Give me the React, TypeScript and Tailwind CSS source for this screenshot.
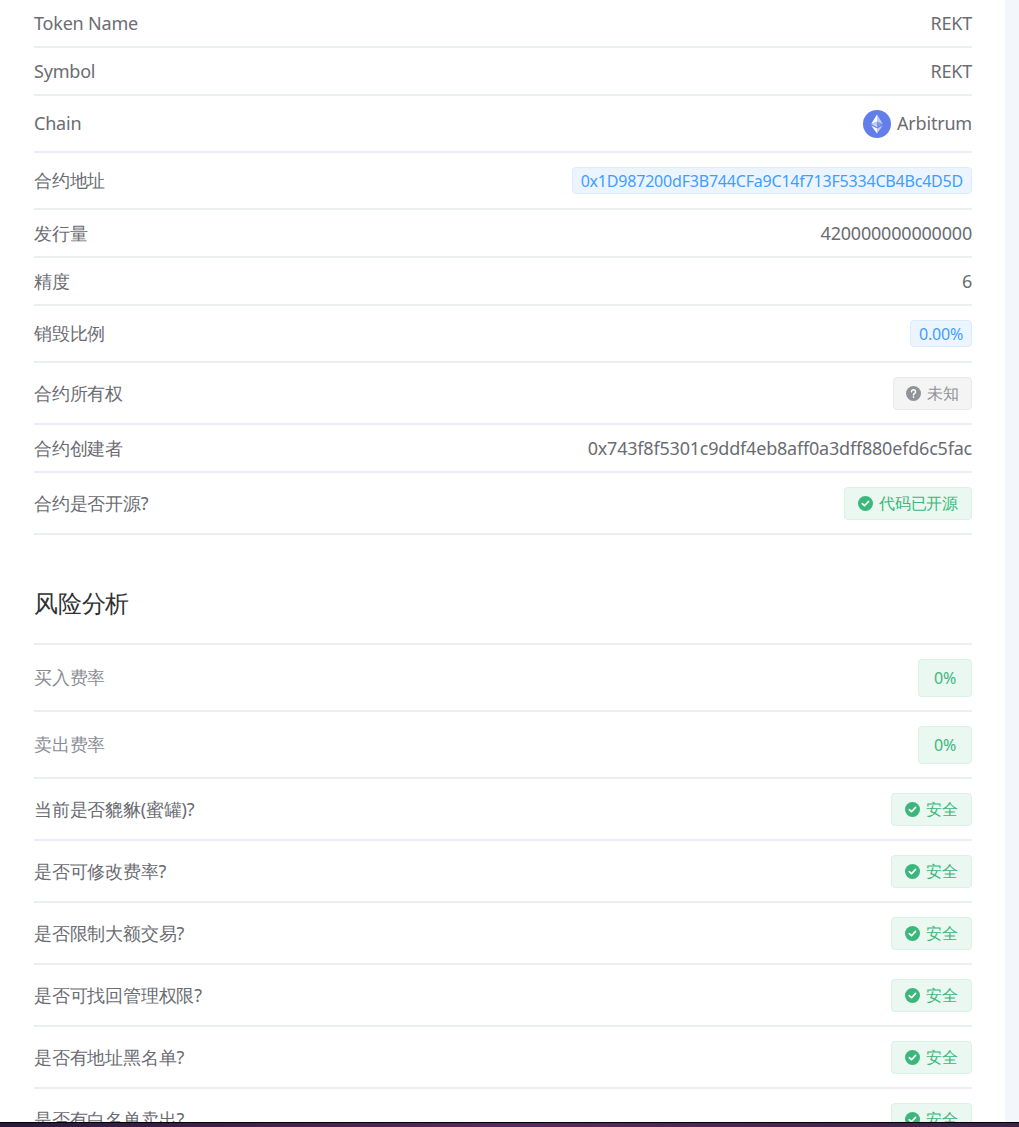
import React from 'react';

const CheckIcon = () => (
  <svg width="15" height="15" viewBox="0 0 16 16" className="shrink-0">
    <circle cx="8" cy="8" r="8" fill="#3cb77b" />
    <path d="M4.6 8.2l2.3 2.2 4.4-4.6" stroke="#fff" strokeWidth="1.8" fill="none" strokeLinecap="round" strokeLinejoin="round" />
  </svg>
);

const QIcon = () => (
  <svg width="15" height="15" viewBox="0 0 16 16" className="shrink-0">
    <circle cx="8" cy="8" r="8" fill="#909399" />
    <path d="M5.8 6.2a2.2 2.2 0 1 1 3 2c-.6.3-.8.6-.8 1.3" stroke="#fff" strokeWidth="1.6" fill="none" strokeLinecap="round" />
    <circle cx="8" cy="11.8" r="0.95" fill="#fff" />
  </svg>
);

const EthIcon = () => (
  <svg width="28" height="28" viewBox="0 0 28 28">
    <circle cx="14" cy="14" r="14" fill="#627eea" />
    <path d="M14 4.5v7l5.8 2.6z" fill="#fff" fillOpacity="0.6" />
    <path d="M14 4.5L8.2 14.1 14 11.5z" fill="#fff" />
    <path d="M14 18.6v4.9l5.8-8.1z" fill="#fff" fillOpacity="0.6" />
    <path d="M14 23.5v-4.9l-5.8-3.2z" fill="#fff" />
    <path d="M14 17.5l5.8-3.4-5.8-2.6z" fill="#fff" fillOpacity="0.2" />
    <path d="M8.2 14.1l5.8 3.4v-6z" fill="#fff" fillOpacity="0.6" />
  </svg>
);

const Safe = ({ text = '安全' }: { text?: string }) => (
  <span className="inline-flex items-center gap-[6px] h-[33px] px-[13px] rounded border border-[#d6f3e4] bg-[#eaf8f1] text-[#3cb77b] text-[16px]">
    <CheckIcon />{text}
  </span>
);

const Row = ({ label, h, children, faint }: { label: string; h: string; children: React.ReactNode; faint?: boolean }) => (
  <div className={`flex items-center justify-between border-b-2 border-[#ebeef5] ${h}`}>
    <span className={`text-[18px] ${faint ? 'text-[#8a8d94]' : 'text-[#6a6c72]'}`}>{label}</span>
    <div className="text-[18px] text-[#6a6c72]">{children}</div>
  </div>
);

export default function App() {
  const risks = ['当前是否貔貅(蜜罐)?', '是否可修改费率?', '是否限制大额交易?', '是否可找回管理权限?', '是否有地址黑名单?'];
  return (
    <div className="relative w-[1019px] h-[1127px] overflow-hidden bg-white font-['DejaVu_Sans','Noto_Sans_CJK_SC',sans-serif] tracking-[-0.2px]">
      <div className="flex h-full">
        <div className="w-[1005px] px-[34px] pr-[33px]">
          <Row label="Token Name" h="h-[48px]">REKT</Row>
          <Row label="Symbol" h="h-[48px]">REKT</Row>
          <Row label="Chain" h="h-[57px]">
            <span className="flex items-center gap-[6px]"><EthIcon />Arbitrum</span>
          </Row>
          <Row label="合约地址" h="h-[57px]">
            <span className="inline-flex items-center h-[27px] px-[8px] rounded border border-[#d9ecff] bg-[#ecf5ff] text-[#409eff] text-[16px]">0x1D987200dF3B744CFa9C14f713F5334CB4Bc4D5D</span>
          </Row>
          <Row label="发行量" h="h-[48px]">420000000000000</Row>
          <Row label="精度" h="h-[48px]">6</Row>
          <Row label="销毁比例" h="h-[57px]">
            <span className="inline-flex items-center h-[27px] px-[8px] rounded border border-[#d9ecff] bg-[#ecf5ff] text-[#409eff] text-[16px]">0.00%</span>
          </Row>
          <Row label="合约所有权" h="h-[62px]">
            <span className="inline-flex items-center gap-[6px] h-[33px] px-[12px] rounded border border-[#e9e9eb] bg-[#f4f4f5] text-[#909399] text-[16px]"><QIcon />未知</span>
          </Row>
          <Row label="合约创建者" h="h-[48px]">0x743f8f5301c9ddf4eb8aff0a3dff880efd6c5fac</Row>
          <Row label="合约是否开源?" h="h-[62px]"><Safe text="代码已开源" /></Row>

          <h2 className="h-[110px] flex items-center pt-[27px] text-[24px] text-[#303133] border-b-2 border-[#ebeef5]">风险分析</h2>
          <Row label="买入费率" h="h-[67px]" faint>
            <span className="inline-flex items-center h-[38px] px-[15px] rounded border border-[#d6f3e4] bg-[#eaf8f1] text-[#3cb77b] text-[16px]">0%</span>
          </Row>
          <Row label="卖出费率" h="h-[67px]" faint>
            <span className="inline-flex items-center h-[38px] px-[15px] rounded border border-[#d6f3e4] bg-[#eaf8f1] text-[#3cb77b] text-[16px]">0%</span>
          </Row>
          {risks.map(r => (
            <Row key={r} label={r} h="h-[62px]"><Safe /></Row>
          ))}
          <Row label="是否有白名单卖出?" h="h-[62px]"><Safe /></Row>
        </div>
        <div className="flex-1 bg-[#f3f6fa]" />
      </div>
      <div className="absolute left-0 right-0 bottom-0 h-[5px] bg-gradient-to-r from-[#2a1a3a] via-[#5a2a5e] to-[#3a2448] border-t border-black" />
    </div>
  );
}
